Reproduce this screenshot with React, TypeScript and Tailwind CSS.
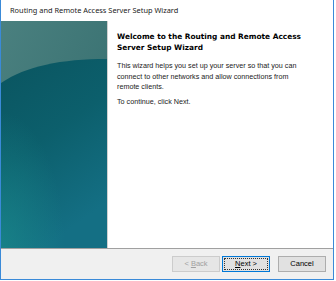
import React from "react";

export default function App() {
  const sans = { fontFamily: '"Liberation Sans", Arial, sans-serif' };
  return (
    <div className="w-[336px] h-[281px] bg-white overflow-hidden">
      <div className="w-[334px] h-[280px] border-x border-b border-[#3a8ad8] flex flex-col bg-white">
        <div className="h-[21px] flex items-center pl-[9px] text-[7.4px] text-[#222] whitespace-nowrap" style={{ fontFamily: '"Noto Sans", "Liberation Sans", sans-serif' }}>
          Routing and Remote Access Server Setup Wizard
        </div>
        <div className="flex h-[227px]">
          <div className="w-[107px] h-full border-r border-[#d0d0d0]">
            <svg width="106" height="227" viewBox="0 0 106 227">
              <defs>
                <linearGradient id="top" x1="0" y1="0" x2="1" y2="1">
                  <stop offset="0" stopColor="#4a807f" />
                  <stop offset="1" stopColor="#336c6d" />
                </linearGradient>
                <linearGradient id="body" x1="0" y1="0" x2="0.4" y2="1">
                  <stop offset="0" stopColor="#0a5560" />
                  <stop offset="0.5" stopColor="#0c5f6c" />
                  <stop offset="1" stopColor="#146f84" />
                </linearGradient>
                <radialGradient id="glow" cx="0" cy="1" r="0.6">
                  <stop offset="0" stopColor="#1a8a8c" stopOpacity="0.7" />
                  <stop offset="1" stopColor="#1a8a8c" stopOpacity="0" />
                </radialGradient>
              </defs>
              <rect width="106" height="227" fill="url(#top)" />
              <path d="M0 62 C 25 45, 60 38, 106 38 L106 227 L0 227 Z" fill="url(#body)" />
              <rect width="106" height="227" fill="url(#glow)" />
            </svg>
          </div>
          <div className="flex-1 pl-[9px] pt-[10px] text-black whitespace-nowrap">
            <div className="text-[7.4px] font-bold leading-[11px]" style={{ fontFamily: '"DejaVu Sans", Verdana, sans-serif' }}>
              Welcome to the Routing and Remote Access<br />Server Setup Wizard
            </div>
            <div className="mt-[8px] text-[7.2px] leading-[10.5px] text-[#1a1a1a]" style={sans}>
              This wizard helps you set up your server so that you can<br />
              connect to other networks and allow connections from<br />
              remote clients.
            </div>
            <div className="mt-[4px] text-[7.2px] leading-[10.5px] text-[#1a1a1a]" style={sans}>
              To continue, click Next.
            </div>
          </div>
        </div>
        <div className="flex-1 border-t border-[#a0a0a0] bg-[#f0f0f0] flex items-center justify-end pr-[7px]" style={sans}>
          <div className="w-[48px] h-[16px] border border-[#cccccc] bg-[#e6e6e6] text-[#a0a0a0] text-[7.5px] flex items-center justify-center">
            &lt;&nbsp;<span className="underline">B</span>ack
          </div>
          <div className="ml-[2px] w-[48px] h-[16px] border border-[#0078d7] bg-[#e1e1e1] text-black text-[7.5px] flex items-center justify-center">
            <div className="w-[44px] h-[12px] border border-dotted border-[#333] flex items-center justify-center">
              <span className="underline">N</span>ext &gt;
            </div>
          </div>
          <div className="ml-[8px] w-[48px] h-[16px] border border-[#adadad] bg-[#e1e1e1] text-black text-[7.5px] flex items-center justify-center">
            Cancel
          </div>
        </div>
      </div>
    </div>
  );
}
